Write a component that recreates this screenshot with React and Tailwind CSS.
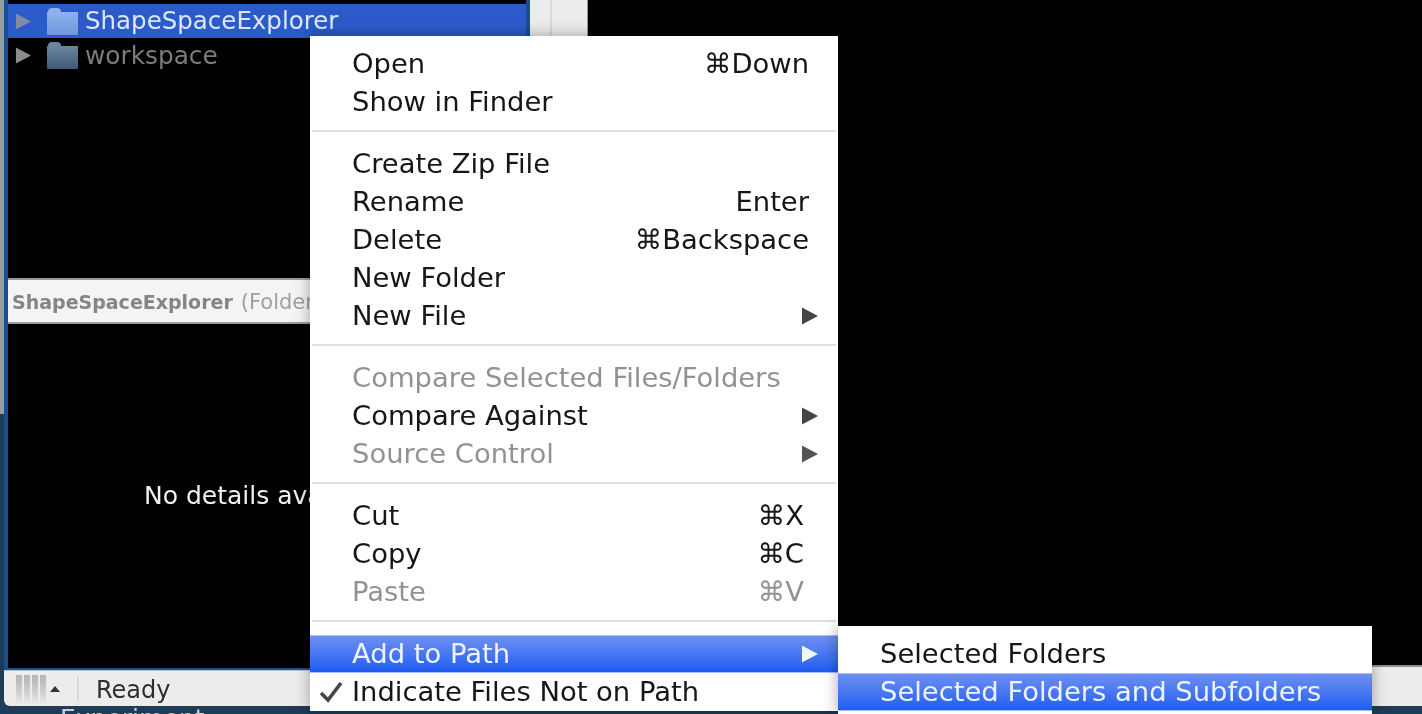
const menuItems = [
  { label: "Open", shortcut: "⌘Down" },
  { label: "Show in Finder" },
  { sep: true },
  { label: "Create Zip File" },
  { label: "Rename", shortcut: "Enter" },
  { label: "Delete", shortcut: "⌘Backspace" },
  { label: "New Folder" },
  { label: "New File", arrow: true },
  { sep: true },
  { label: "Compare Selected Files/Folders", disabled: true },
  { label: "Compare Against", arrow: true },
  { label: "Source Control", disabled: true, arrow: true },
  { sep: true },
  { label: "Cut", shortcut: "⌘X", narrow: true },
  { label: "Copy", shortcut: "⌘C", narrow: true },
  { label: "Paste", shortcut: "⌘V", narrow: true, disabled: true },
  { sep: true },
  { label: "Add to Path", arrow: true, selected: true },
  { label: "Indicate Files Not on Path", checked: true },
];

function Triangle({ className }) {
  return (
    <svg width="18" height="20" viewBox="0 0 18 20" className={className}>
      <path d="M1 1.5 L17 10 L1 18.5 Z" fill="currentColor" />
    </svg>
  );
}

function Folder({ from, to }) {
  return (
    <div className="ml-[15px] flex h-[27px] w-[31px] shrink-0 flex-col">
      <div className={`ml-[1px] h-[4px] w-[13px] rounded-t-sm ${from}`} />
      <div className={`flex-1 rounded-b-[1px] bg-gradient-to-b ${to}`} />
    </div>
  );
}

function MenuRow({ item }) {
  const textColor = item.selected
    ? "text-[#eef3ff] bg-gradient-to-b from-[#6e8ff2] to-[#1c5cf0] border-t border-b border-[#a9bdf6]"
    : item.disabled
      ? "text-[#929292]"
      : "text-[#161616]";
  return (
    <div className={`flex h-[38px] items-center ${textColor}`}>
      <div className="flex w-[42px] shrink-0 justify-end pr-[9px]">
        {item.checked && (
          <svg width="24" height="22" viewBox="0 0 24 22" className="text-[#444]">
            <path d="M2 12 L9 19 L22 2" fill="none" stroke="currentColor" strokeWidth="3.6" />
          </svg>
        )}
      </div>
      <span className="flex-1">{item.label}</span>
      {item.shortcut && (
        <span className={item.narrow ? "pr-[34px]" : "pr-[29px]"}>{item.shortcut}</span>
      )}
      {item.arrow && (
        <Triangle
          className={`mr-[19px] ${item.selected ? "text-[#f2f5ff]" : item.disabled ? "text-[#555]" : "text-[#444]"}`}
        />
      )}
    </div>
  );
}

export default function App() {
  return (
    <div className="relative flex h-[714px] w-[1422px] flex-col overflow-hidden bg-[#1d3c57] font-['DejaVu_Sans',sans-serif] blur-[0.6px]">
      <div className="flex h-[706px] shrink-0">
        <div className="h-[414px] w-1 shrink-0 bg-[#9b9b9b]" />

        {/* Window */}
        <div className="flex min-w-0 flex-1">
          <div className="flex w-[834px] shrink-0 flex-col">
            <div className="flex min-h-0 flex-1 bg-black">
              {/* Current folder panel */}
              <div className="flex w-[526px] shrink-0 flex-col border-x-4 border-b-2 border-[#17508f] bg-black">
                <div className="h-1 shrink-0" />
                <div className="flex h-[34px] shrink-0 items-center bg-[#2a5bc9] text-[24.5px] text-[#dde6ff]">
                  <Triangle className="ml-[7px] h-[19px] w-[17px] text-[#7f8ca3]" />
                  <Folder from="bg-[#8cb0ea]" to="from-[#8fb2ec] to-[#6f97dc]" />
                  <span className="ml-[7px]">ShapeSpaceExplorer</span>
                </div>
                <div className="flex h-[34px] shrink-0 items-center pt-[1px] text-[24.8px] text-[#7c7c7c]">
                  <Triangle className="ml-[7px] h-[19px] w-[17px] text-[#8c8c8c]" />
                  <Folder from="bg-[#6a86a0]" to="from-[#6a86a0] to-[#3f5a75]" />
                  <span className="ml-[7px]">workspace</span>
                </div>
                <div className="flex-1" />
                <div className="flex h-[46px] shrink-0 items-center border-y-2 border-[#9a9a9a] bg-[#f4f4f4] pt-[3px] pl-1 text-[19px] whitespace-nowrap">
                  <span className="font-bold text-[#858585]">ShapeSpaceExplorer</span>
                  <span className="ml-2 text-[21px] text-[#a0a0a0]">(Folder)</span>
                </div>
                <div className="flex h-[344px] shrink-0 items-center justify-center text-[25px] text-[#f0f0f0]">
                  No details available
                </div>
              </div>

              <div className="flex h-[36px] w-[58px] shrink-0 border-r border-[#9a9a9a] bg-[#ececec]">
                <div className="w-[22px] border-r-2 border-[#d3d9e0]" />
              </div>
            </div>

            {/* Status bar */}
            <div className="flex h-[36px] shrink-0 items-center rounded-bl-md border-t border-[#b9c6d4] bg-[#ececec] text-[24px] text-[#2e2e2e]">
              <div className="ml-3 flex h-[28px] gap-[2px]">
                <div className="w-[6px] bg-gradient-to-b from-[#b4b4b4] to-[#e4e4e4]" />
                <div className="w-[6px] bg-gradient-to-b from-[#b4b4b4] to-[#e4e4e4]" />
                <div className="w-[6px] bg-gradient-to-b from-[#b4b4b4] to-[#e4e4e4]" />
                <div className="w-[6px] bg-gradient-to-b from-[#b4b4b4] to-[#e4e4e4]" />
              </div>
              <svg width="10" height="6" viewBox="0 0 10 6" className="ml-[4px] text-[#333]">
                <path d="M5 0 L10 6 H0 Z" fill="currentColor" />
              </svg>
              <div className="ml-[17px] h-[24px] w-[2px] bg-[#d8d8d8]" />
              <span className="ml-[17px] pt-[2px]">Ready</span>
            </div>
          </div>

          <div className="flex flex-1 flex-col">
            <div className="flex-1 bg-black" />
            <div className="h-[41px] shrink-0 border-t-2 border-[#8b929a] bg-[#ececec]" />
          </div>
        </div>
      </div>

      <div className="pl-[60px] text-[25px] leading-[26px] text-[#cfcfcf]">Experiment</div>

      {/* Context menu */}
      <div className="absolute top-[36px] left-[310px] z-10 w-[528px] bg-white pt-[9px] text-[27.4px] whitespace-nowrap shadow-[0_0_14px_rgba(0,0,0,0.35)]">
        {menuItems.map((item, i) =>
          item.sep ? (
            <div key={i} className="flex h-[24px] items-start px-[2px] pt-[9px]">
              <div className="h-[2px] flex-1 bg-[#dfdfdf]" />
            </div>
          ) : (
            <MenuRow key={i} item={item} />
          ),
        )}
      </div>

      {/* Add to Path submenu */}
      <div className="absolute top-[626px] left-[838px] z-10 h-[88px] w-[534px] bg-white pt-[9px] text-[27.4px] whitespace-nowrap shadow-[0_0_14px_rgba(0,0,0,0.35)]">
        <MenuRow item={{ label: "Selected Folders" }} />
        <MenuRow item={{ label: "Selected Folders and Subfolders", selected: true }} />
      </div>
    </div>
  );
}
